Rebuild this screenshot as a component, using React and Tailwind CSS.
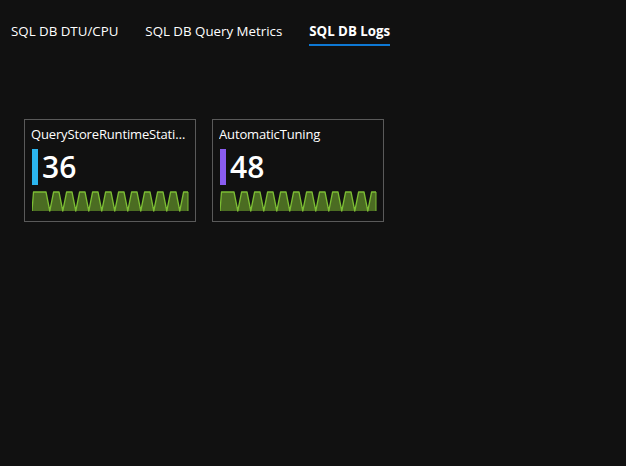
import React from "react";

function Spark() {
  const top = 1;
  const bot = 20;
  const w = 3.8;
  const pts = [[0, bot], [1.5, top]];
  for (let k = 0; k < 11; k++) {
    const b = 17.8 + 13 * k;
    pts.push([b - w, top]);
    pts.push([b, bot]);
    pts.push([b + w, top]);
  }
  pts.push([156, top]);
  const line = pts.map((p) => p.join(",")).join(" ");
  const fill = line + ` 156,${bot} 0,${bot}`;
  return (
    <svg width="157" height="22" viewBox="0 0 157 22" className="block">
      <polygon points={fill} fill="#4b6c22" />
      <polyline points={line} fill="none" stroke="#7cbd34" strokeWidth="1.3" strokeLinejoin="round" />
      <line x1="156" y1={top} x2="156" y2={bot} stroke="#7cbd34" strokeWidth="1" />
    </svg>
  );
}

function Card({ title, value, color }) {
  return (
    <div className="w-[172px] h-[103px] border border-[#5a5a5a] bg-[#111111] pl-[6px] pr-[5px] pt-[5px] flex flex-col">
      <div className="text-[13px] tracking-[-0.15px] leading-[18px] text-white truncate">{title}</div>
      <div className="flex items-center mt-[6px] h-[36px] pl-[1px]">
        <div className={`w-[6px] h-[36px] ${color}`} />
        <div className="ml-[4px] text-[30px] font-semibold leading-none text-white">{value}</div>
      </div>
      <div className="mt-[6px] pl-[1px]">
        <Spark />
      </div>
    </div>
  );
}

export default function App() {
  return (
    <div
      className="w-[626px] h-[466px] bg-[#111111] text-white overflow-hidden"
      style={{ fontFamily: '"Open Sans", "Noto Sans", sans-serif' }}
    >
      <div className="flex pl-[11px] pt-[21px] gap-[27px] text-[13.3px]">
        <div className="flex flex-col">
          <span className="leading-[20px]">SQL DB DTU/CPU</span>
        </div>
        <div className="flex flex-col">
          <span className="leading-[20px]">SQL DB Query Metrics</span>
        </div>
        <div className="flex flex-col">
          <span className="leading-[20px] font-bold">SQL DB Logs</span>
          <div className="mt-[3px] h-[2px] bg-[#0e78d4]" />
        </div>
      </div>
      <div className="flex gap-[16px] pl-[24px] pt-[73px]">
        <Card title="QueryStoreRuntimeStatistics" value="36" color="bg-[#2bb5ee]" />
        <Card title="AutomaticTuning" value="48" color="bg-[#8a5cf0]" />
      </div>
    </div>
  );
}
